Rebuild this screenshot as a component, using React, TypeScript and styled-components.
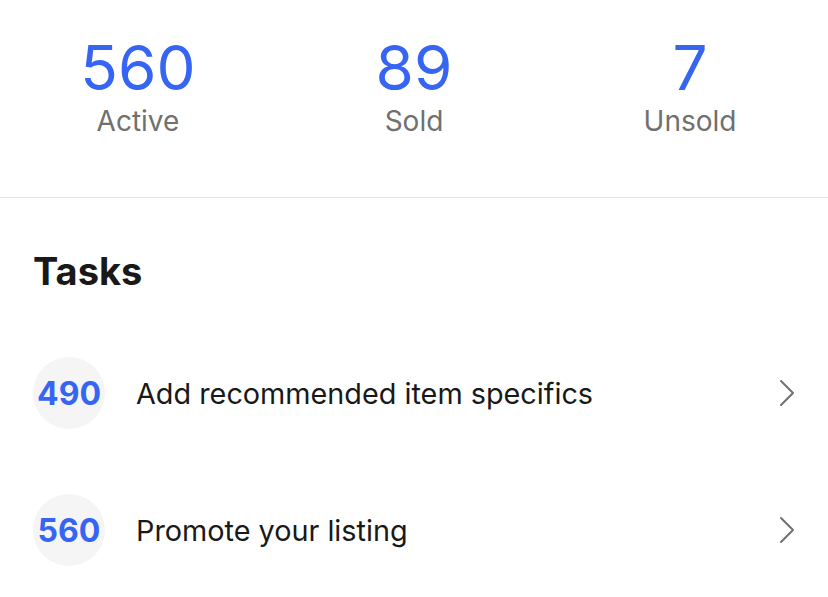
import { createGlobalStyle, styled } from "styled-components";

const GlobalStyle = createGlobalStyle`
  body {
    margin: 0;
    background: #ffffff;
    font-family: Inter, "Liberation Sans", Arial, sans-serif;
  }
`;

const Page = styled.div`
  width: 828px;
`;

const Stats = styled.div`
  display: grid;
  grid-template-columns: repeat(3, 1fr);
  padding-top: 30px;
  height: 198px;
  box-sizing: border-box;
  border-bottom: 1px solid #e5e5e5;
`;

const Stat = styled.div`
  display: flex;
  flex-direction: column;
  align-items: center;
`;

const StatValue = styled.span`
  font-size: 62px;
  line-height: 76px;
  color: #3665f3;
  font-weight: 400;
`;

const StatLabel = styled.span`
  font-size: 28px;
  line-height: 30px;
  color: #707070;
`;

const Section = styled.section`
  padding: 50px 32px 0 33px;
`;

const Title = styled.h2`
  margin: 0 0 63px;
  font-size: 38px;
  line-height: 46px;
  font-weight: 700;
  color: #191919;
`;

const TaskList = styled.div`
  display: flex;
  flex-direction: column;
  gap: 65px;
`;

const Task = styled.div`
  display: flex;
  align-items: center;
  gap: 31px;
`;

const Count = styled.div`
  width: 72px;
  height: 72px;
  border-radius: 50%;
  background: #f5f5f5;
  display: flex;
  align-items: center;
  justify-content: center;
  font-size: 32px;
  font-weight: 700;
  color: #3665f3;
  flex-shrink: 0;
`;

const TaskText = styled.span`
  flex: 1;
  font-size: 28.8px;
  color: #191919;
`;

const Chevron = () => (
  <svg width="18" height="28" viewBox="0 0 18 28" fill="none">
    <path d="M3 2 L15 14 L3 26" stroke="#707070" strokeWidth="2" strokeLinecap="round" strokeLinejoin="round" />
  </svg>
);

const stats = [
  { value: 560, label: "Active" },
  { value: 89, label: "Sold" },
  { value: 7, label: "Unsold" },
];

const tasks = [
  { count: 490, text: "Add recommended item specifics" },
  { count: 560, text: "Promote your listing" },
];

export default function App() {
  return (
    <Page>
      <GlobalStyle />
      <Stats>
        {stats.map((s) => (
          <Stat key={s.label}>
            <StatValue>{s.value}</StatValue>
            <StatLabel>{s.label}</StatLabel>
          </Stat>
        ))}
      </Stats>
      <Section>
        <Title>Tasks</Title>
        <TaskList>
          {tasks.map((t) => (
            <Task key={t.text}>
              <Count>{t.count}</Count>
              <TaskText>{t.text}</TaskText>
              <Chevron />
            </Task>
          ))}
        </TaskList>
      </Section>
    </Page>
  );
}
